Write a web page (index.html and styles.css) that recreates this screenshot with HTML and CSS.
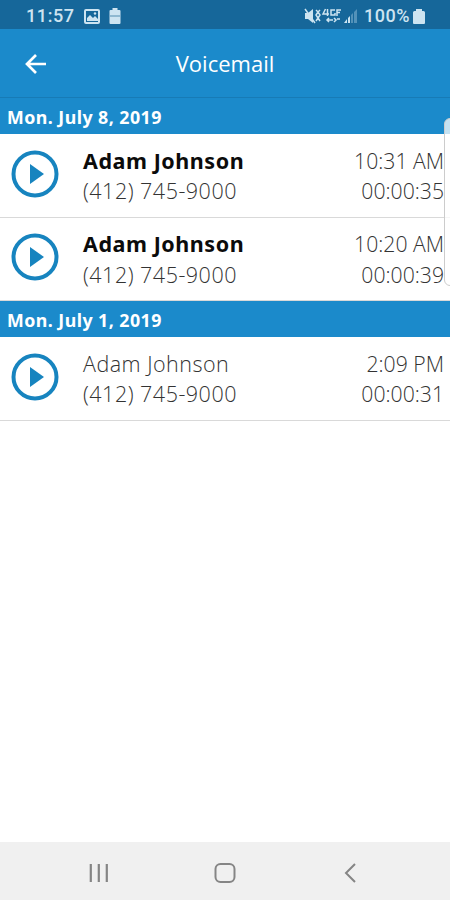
FILE: index.html
```html
<!DOCTYPE html>
<html lang="en">
<head>
<meta charset="utf-8">
<title>Voicemail</title>
<link rel="stylesheet" href="styles.css">
</head>
<body>
<div class="phone">
  <div class="status">
    <span class="clock">11:57</span>
    <svg class="photo" width="16" height="15" viewBox="0 0 16 15"><rect x="1" y="1" width="14" height="13" rx="1" fill="none" stroke="currentColor" stroke-width="2"/><path d="M3 12V9l3-3 3 3 2-2 3 3v2z" fill="currentColor"/><circle cx="11" cy="4.500" r="1.200" fill="currentColor"/></svg>
    <svg class="case" width="12" height="16" viewBox="0 0 12 16"><path d="M3.500 2V0h5v2H10.500a1 1 0 0 1 1 1v12a1 1 0 0 1-1 1h-9a1 1 0 0 1-1-1V3a1 1 0 0 1 1-1z" fill="currentColor"/><path d="M1 8h10" stroke="#8fb8d0" stroke-width="2"/></svg>
    <svg class="signals" width="56" height="18" viewBox="0 0 56 18" fill="none" stroke="currentColor" stroke-width="1.500"><path d="M1 6h3l5-4v14l-5-4H1z" fill="currentColor" stroke="none"/><path d="M1 2l10 14M12 3l2 2-2 3 2 3-2 3M16 3l-2 2 2 3-2 3 2 3"/><path d="M21.500 2l-2.500 5h6M23.500 2v7M31 3h-4v5h4V6M37 3h-4v6M33 5.500h3M23 13h6M25 11l-2 2 2 2M30 11l2 2-2 2M33 12h3"/><path d="M40 16h3v-4zM44 16v-5l2-2v7z" fill="currentColor" stroke="none"/><path d="M47 16V8l2-2v10zM50 16V5l3-3v14z" fill="#5392b9" stroke="none"/></svg>
    <span class="percent">100%</span>
    <svg class="battery" width="12" height="15" viewBox="0 0 12 15"><path d="M3 2V0h6v2h1.500A1.500 1.500 0 0 1 12 3.500V14a1 1 0 0 1-1 1H1a1 1 0 0 1-1-1V3.500A1.500 1.500 0 0 1 1.500 2z" fill="currentColor"/></svg>
  </div>
  <header class="bar">
    <svg class="back" width="22" height="20" viewBox="0 0 22 20" fill="none" stroke="#fff" stroke-width="2.700"><path d="M11 1L2 10l9 9M2 10h19"/></svg>
    <h1>Voicemail</h1>
  </header>
  <main>
    <h2 class="date">Mon. July 8, 2019</h2>
    <div class="row unread">
      <svg class="play" width="48" height="48" viewBox="0 0 48 48"><circle cx="24" cy="24" r="21.500" fill="none" stroke="#1784bf" stroke-width="4"/><path d="M19 14v20l14-10z" fill="#1784bf"/></svg>
      <div class="who"><div class="name">Adam Johnson</div><div>(412) 745-9000</div></div>
      <div class="when"><div>10:31 AM</div><div class="length">00:00:35</div></div>
    </div>
    <div class="row unread">
      <svg class="play" width="48" height="48" viewBox="0 0 48 48"><circle cx="24" cy="24" r="21.500" fill="none" stroke="#1784bf" stroke-width="4"/><path d="M19 14v20l14-10z" fill="#1784bf"/></svg>
      <div class="who"><div class="name">Adam Johnson</div><div>(412) 745-9000</div></div>
      <div class="when"><div>10:20 AM</div><div class="length">00:00:39</div></div>
    </div>
    <h2 class="date second">Mon. July 1, 2019</h2>
    <div class="row">
      <svg class="play" width="48" height="48" viewBox="0 0 48 48"><circle cx="24" cy="24" r="21.500" fill="none" stroke="#1784bf" stroke-width="4"/><path d="M19 14v20l14-10z" fill="#1784bf"/></svg>
      <div class="who"><div class="name">Adam Johnson</div><div>(412) 745-9000</div></div>
      <div class="when"><div>2:09 PM</div><div class="length">00:00:31</div></div>
    </div>
  </main>
  <nav class="nav">
    <svg width="20" height="20" viewBox="0 0 20 20" stroke="#858585" stroke-width="2.200"><path d="M1.800 1v18M9.800 1v18M17.800 1v18"/></svg>
    <svg class="home" width="22" height="22" viewBox="0 0 22 22" fill="none" stroke="#858585" stroke-width="2"><rect x="1.500" y="2" width="19" height="18" rx="5"/></svg>
    <svg width="12" height="20" viewBox="0 0 12 20" fill="none" stroke="#858585" stroke-width="2"><path d="M11 1L2 10l9 9"/></svg>
  </nav>
  <div class="edge"></div>
</div>
</body>
</html>
```
FILE: styles.css
```css
* { box-sizing: border-box; }
body { margin: 0; background: #fff; font-family: "Open Sans", "Noto Sans", sans-serif; }
.phone { position: relative; width: 450px; height: 900px; overflow: hidden; display: flex; flex-direction: column; }
svg { display: block; flex: none; }
.status { height: 29px; flex: none; background: #16679a; color: #cde4f1; display: flex; align-items: center; padding: 3px 25px 0 26px; font: 500 18px/26px Roboto, sans-serif; }
.clock { width: 58px; letter-spacing: .6px; }
.case { margin-left: 9px; }
.signals { margin-left: auto; }
.percent { width: 49px; margin-left: 4px; letter-spacing: .5px; }
.bar { height: 68px; flex: none; background: #1b8acb; display: grid; grid-template-columns: 55px 1fr 55px; align-items: center; color: #fff; }
.back { margin-left: 25px; margin-top: 2px; }
h1 { margin: 0; font-size: 22px; font-weight: 400; line-height: 30px; text-align: center; }
main { flex: 1; }
.date { margin: 0; height: 37px; padding-left: 7px; background: #1b8acb; color: #fff; font-family: "Noto Sans", sans-serif; font-size: 17.800px; font-weight: 700; letter-spacing: .45px; line-height: 38px; border-top: 1px solid #177bb6; }
.second { height: 36px; border-top: 0; }
.row { height: 83.500px; display: flex; border-bottom: 1px solid #d9d9d9; padding: 11.500px 6px 0 11px; font-size: 21.500px; font-weight: 300; line-height: 30.500px; letter-spacing: .5px; color: #333; white-space: nowrap; }
.play { margin-top: 4px; }
.who { margin-left: 24px; flex: 1; }
.unread .name { font-family: "Noto Sans", sans-serif; font-weight: 700; letter-spacing: .55px; color: #0b0b0b; }
.when { text-align: right; font-size: 21.200px; letter-spacing: 0; }
.nav { height: 58px; flex: none; background: #f0f0f0; display: flex; align-items: center; justify-content: space-between; padding: 3px 94px 0 89px; }
.home { margin-right: 4px; }
.edge { position: absolute; left: 444px; top: 118px; width: 12px; height: 168px; border-radius: 7px; border: 1px solid #ccc; background: rgba(255,255,255,.75); }
```
